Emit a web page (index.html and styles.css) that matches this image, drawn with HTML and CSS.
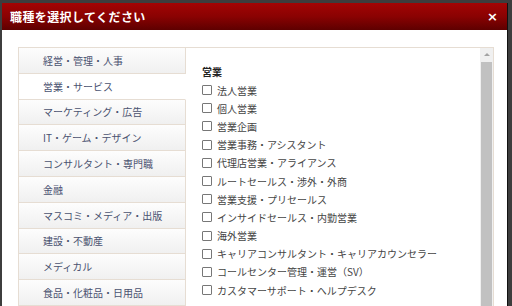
FILE: index.html
```html
<!DOCTYPE html>
<html lang="ja">
<head>
    <meta charset="UTF-8">
    <title>職種を選択してください</title>
    <link rel="stylesheet" href="styles.css">
</head>
<body>
    <div class="dialog">
        <div class="dialog-head">
            <h3 class="dialog-title">職種を選択してください</h3>
            <span class="close">&times;</span>
        </div>
        <div class="dialog-body">
            <ul class="cat-list">
                <li class="cat">経営・管理・人事</li>
                <li class="cat active">営業・サービス</li>
                <li class="cat">マーケティング・広告</li>
                <li class="cat">IT・ゲーム・デザイン</li>
                <li class="cat">コンサルタント・専門職</li>
                <li class="cat">金融</li>
                <li class="cat">マスコミ・メディア・出版</li>
                <li class="cat">建設・不動産</li>
                <li class="cat">メディカル</li>
                <li class="cat">食品・化粧品・日用品</li>
            </ul>
            <div class="job-panel">
                <div class="job-scroll">
                    <p class="job-group">営業</p>
                    <label class="job"><span class="box"></span>法人営業</label>
                    <label class="job"><span class="box"></span>個人営業</label>
                    <label class="job"><span class="box"></span>営業企画</label>
                    <label class="job"><span class="box"></span>営業事務・アシスタント</label>
                    <label class="job"><span class="box"></span>代理店営業・アライアンス</label>
                    <label class="job"><span class="box"></span>ルートセールス・渉外・外商</label>
                    <label class="job"><span class="box"></span>営業支援・プリセールス</label>
                    <label class="job"><span class="box"></span>インサイドセールス・内勤営業</label>
                    <label class="job"><span class="box"></span>海外営業</label>
                    <label class="job"><span class="box"></span>キャリアコンサルタント・キャリアカウンセラー</label>
                    <label class="job"><span class="box"></span>コールセンター管理・運営（SV）</label>
                    <label class="job"><span class="box"></span>カスタマーサポート・ヘルプデスク</label>
                </div>
                <div class="scrollbar">
                    <div class="sb-up"></div>
                    <div class="sb-thumb"></div>
                </div>
            </div>
        </div>
    </div>
</body>
</html>
```

FILE: styles.css
```css
* { margin: 0; padding: 0; box-sizing: border-box; }
html, body { height: 100%; overflow: hidden; }
body {
    background: #3d3d3d;
    font-family: "Noto Sans CJK JP", "Noto Sans", sans-serif;
    padding: 3px 3px 0 2px;
}
.dialog {
    width: 506px;
    height: 100%;
    display: flex;
    flex-direction: column;
    background: #fff;
    border-right: 1px solid #111;
}
.dialog-head {
    height: 27px;
    flex-shrink: 0;
    background: linear-gradient(#a30404 0%, #8a0202 50%, #5e0000 100%);
    display: flex;
    align-items: center;
    justify-content: space-between;
    padding: 0 9px 0 8px;
}
.dialog-title { color: #fff; font-size: 12px; font-weight: bold; letter-spacing: 0.4px; }
.close { color: #fff; font-size: 13px; font-weight: bold; line-height: 1; font-family: "DejaVu Sans", sans-serif; }

.dialog-body {
    flex: 1;
    min-height: 0;
    overflow: hidden;
    display: flex;
    padding: 17px 13px 0 16px;
}
.cat-list {
    list-style: none;
    width: 168px;
    border-top: 1px solid #e6ddd3;
    flex-shrink: 0;
}
.cat {
    height: 25.8px;
    display: flex;
    align-items: center;
    padding-left: 24px;
    font-size: 10px;
    color: #4a5270;
    background: linear-gradient(#fdfdfd, #f0f0f0);
    border-left: 1px solid #e6ddd3;
    border-right: 1px solid #e6ddd3;
    border-bottom: 1px solid #e6ddd3;
}
.cat.active { background: #fff; border-right-color: #fff; }

.job-panel {
    flex: 1;
    display: flex;
    border-top: 1px solid #e6ddd3;
    border-right: 1px solid #e6ddd3;
}
.job-scroll { flex: 1; padding: 15px 0 0 16px; }
.job-group { font-size: 10px; font-weight: bold; color: #222; height: 18px; line-height: 18px; }
.job {
    display: flex;
    align-items: center;
    gap: 5px;
    height: 18.2px;
    font-size: 10px;
    color: #444;
}
.box {
    width: 10px;
    height: 10px;
    border: 1px solid #777;
    border-radius: 1px;
    background: #fff;
}
.scrollbar { width: 13px; display: flex; flex-direction: column; background: #f0f0f0; }
.sb-up {
    height: 14px;
    position: relative;
    background: #f0f0f0;
}
.sb-up::after {
    content: "";
    position: absolute;
    left: 4px;
    top: 5px;
    border-left: 3px solid transparent;
    border-right: 3px solid transparent;
    border-bottom: 3px solid #a3a3a3;
}
.sb-thumb { flex: 1; background: #c1c1c1; margin: 0 1px; }
```
